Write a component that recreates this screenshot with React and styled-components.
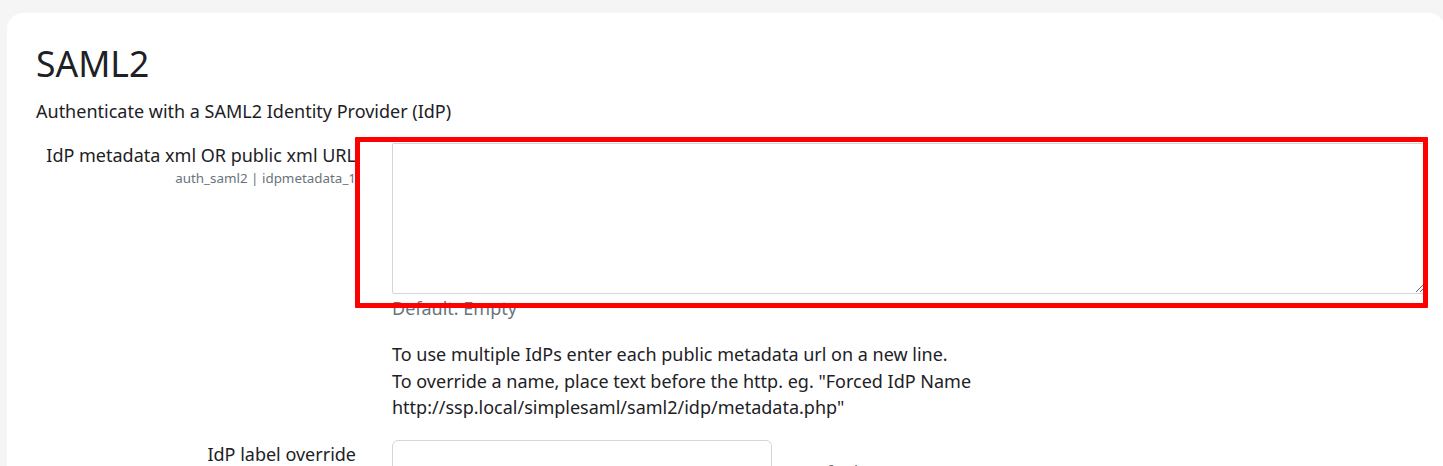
import React from "react";
import styled, { createGlobalStyle } from "styled-components";

const GlobalStyle = createGlobalStyle`
  html, body {
    margin: 0;
    padding: 0;
    background: #f5f5f5;
    overflow: hidden;
  }
  body {
    font-family: "Noto Sans", "Open Sans", sans-serif;
    color: #1d2125;
  }
`;

const Page = styled.div`
  height: 466px;
  padding: 13px 0 0 7px;
  box-sizing: border-box;
  overflow: hidden;
`;

const Card = styled.section`
  width: 1438px;
  min-height: 520px;
  box-sizing: border-box;
  padding: 29px 20px 0 29px;
  background: #fff;
  border-radius: 16px;
`;

const Heading = styled.h2`
  margin: 0;
  font-size: 35.5px;
  font-weight: 400;
  line-height: 43px;
`;

const Intro = styled.p`
  margin: 13px 0 0;
  font-size: 18px;
  line-height: 27px;
`;

const SettingRow = styled.div`
  display: grid;
  grid-template-columns: 320px 1fr;
  column-gap: 36px;
  margin-top: ${(p) => p.$top}px;
`;

const LabelCol = styled.div`
  text-align: right;
  padding-top: ${(p) => p.$pad || 0}px;
  white-space: nowrap;
`;

const Label = styled.div`
  font-size: 18px;
  line-height: 24px;
`;

const SubLabel = styled.div`
  margin-top: 2px;
  font-size: 13.4px;
  line-height: 19px;
  color: #6a737b;
`;

const Setting = styled.div`
  position: relative;
`;

const TextArea = styled.textarea`
  display: block;
  width: 100%;
  height: 151px;
  box-sizing: border-box;
  margin: 0;
  padding: 6px 12px;
  border: 1px solid #d3d6da;
  border-radius: 2px;
  background: #fff;
  font-family: inherit;
  font-size: 16px;
  resize: both;
  outline: none;
`;

const Highlight = styled.div`
  position: absolute;
  left: -37px;
  top: -6px;
  width: 1073px;
  height: 171px;
  box-sizing: border-box;
  border: 5px solid #ff0000;
  border-radius: 1px;
  pointer-events: none;
`;

const DefaultInfo = styled.div`
  margin-top: ${(p) => p.$top || 0}px;
  font-size: 18px;
  line-height: 24px;
  color: #6a737b;
  white-space: nowrap;
`;

const Description = styled.div`
  margin-top: 21px;
  font-size: 18px;
  line-height: 26.7px;
`;

const InlineSetting = styled.div`
  display: flex;
  align-items: flex-start;
  gap: 31px;
`;

const TextInput = styled.input`
  width: 380px;
  height: 38px;
  flex-shrink: 0;
  box-sizing: border-box;
  margin: 0;
  padding: 6px 12px;
  border: 1px solid #d3d6da;
  border-radius: 6px;
  background: #fff;
  font-family: inherit;
  font-size: 16px;
  outline: none;
`;

export default function App() {
  return (
    <>
      <GlobalStyle />
      <Page>
        <Card>
          <Heading>SAML2</Heading>
          <Intro>Authenticate with a SAML2 Identity Provider (IdP)</Intro>

          <SettingRow $top={18}>
            <LabelCol>
              <Label>IdP metadata xml OR public xml URL</Label>
              <SubLabel>auth_saml2 | idpmetadata_1</SubLabel>
            </LabelCol>
            <Setting>
              <TextArea />
              <Highlight />
              <DefaultInfo $top={2}>Default: Empty</DefaultInfo>
              <Description>
                To use multiple IdPs enter each public metadata url on a new line.
                <br />
                To override a name, place text before the http. eg. "Forced IdP Name
                <br />
                http://ssp.local/simplesaml/saml2/idp/metadata.php"
              </Description>
            </Setting>
          </SettingRow>

          <SettingRow $top={19}>
            <LabelCol $pad={2}>
              <Label>IdP label override</Label>
            </LabelCol>
            <InlineSetting>
              <TextInput type="text" />
              <DefaultInfo $top={20}>Default: Empty</DefaultInfo>
            </InlineSetting>
          </SettingRow>
        </Card>
      </Page>
    </>
  );
}
